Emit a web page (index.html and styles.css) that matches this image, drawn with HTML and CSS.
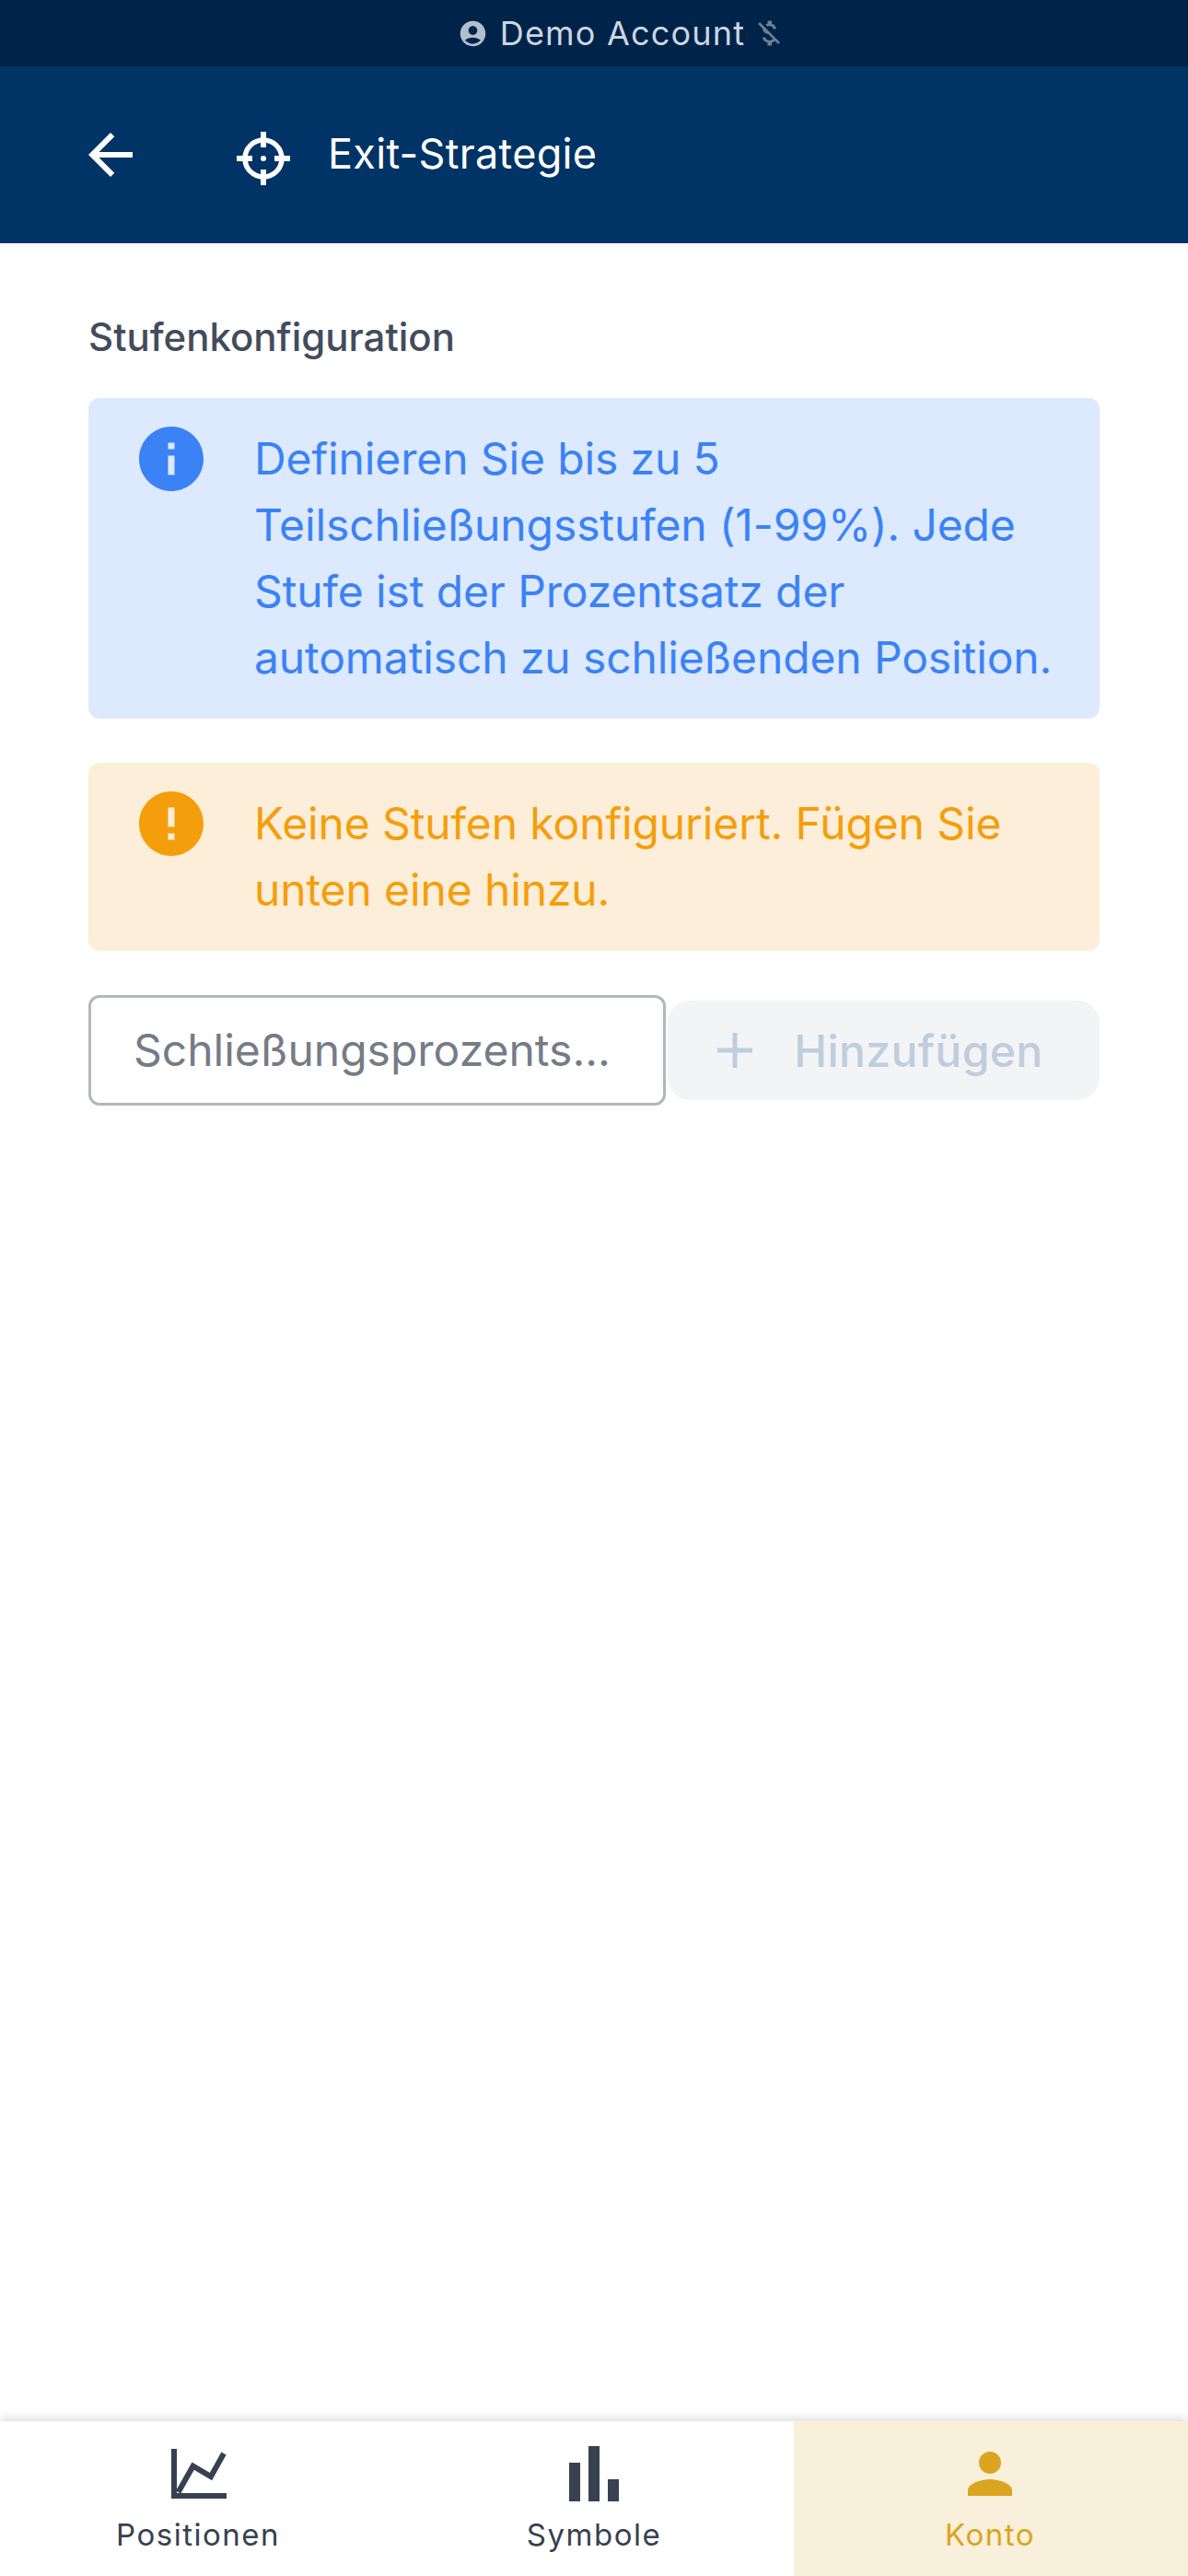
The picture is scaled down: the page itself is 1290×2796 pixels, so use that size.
FILE: index.html
```html
<!DOCTYPE html>
<html lang="de">
<head>
<meta charset="utf-8">
<title>Exit-Strategie</title>
<link rel="stylesheet" href="styles.css">
</head>
<body>
<div class="app">
  <div class="status">
    <svg class="status-user" viewBox="0 0 24 24"><path d="M12 2C6.48 2 2 6.48 2 12s4.48 10 10 10 10-4.48 10-10S17.52 2 12 2zm0 4c1.93 0 3.5 1.57 3.5 3.5S13.93 13 12 13s-3.5-1.57-3.5-3.5S10.07 6 12 6zm0 14c-2.03 0-4.43-.82-6.14-2.88C7.55 15.8 9.68 15 12 15s4.45.8 6.14 2.12C16.43 19.18 14.03 20 12 20z"/></svg>
    <span class="status-text">Demo Account</span>
    <svg class="status-money" viewBox="0 0 24 24"><path d="M12.5 6.9c1.78 0 2.44.85 2.5 2.1h2.21c-.07-1.72-1.12-3.3-3.21-3.81V3h-3v2.16c-.53.12-1.03.3-1.48.54l1.47 1.47c.41-.17.91-.27 1.51-.27zM5.33 4.06L4.06 5.33 7.5 8.77c0 2.08 1.56 3.22 3.91 3.91l3.51 3.51c-.34.48-1.05.91-2.42.91-2.06 0-2.87-.92-2.98-2.1h-2.2c.12 2.19 1.76 3.42 3.68 3.83V21h3v-2.15c.96-.18 1.82-.55 2.45-1.12l2.22 2.22 1.27-1.27L5.33 4.06z"/></svg>
  </div>
  <header class="appbar">
    <svg class="back" viewBox="0 0 24 24"><path d="M20 11H7.83l5.59-5.59L12 4l-8 8 8 8 1.41-1.41L7.83 13H20v-2z"/></svg>
    <svg class="target" viewBox="0 0 60 60"><circle cx="30" cy="30" r="20" fill="none" stroke="#fff" stroke-width="5.5"/><path d="M27 1h6v17h-6zM27 42h6v17h-6zM1 27h17v6H1zM42 27h17v6H42z" fill="#fff"/><circle cx="30" cy="30" r="3" fill="#fff"/></svg>
    <h1 class="title">Exit-Strategie</h1>
  </header>
  <main class="main">
    <h2 class="section">Stufenkonfiguration</h2>
    <div class="notice notice-info">
      <svg class="notice-icon" viewBox="0 0 24 24"><path d="M12 2C6.48 2 2 6.48 2 12s4.48 10 10 10 10-4.48 10-10S17.52 2 12 2zm1 15h-2v-6h2v6zm0-8h-2V7h2v2z"/></svg>
      <p class="notice-text">Definieren Sie bis zu 5 Teilschließungsstufen (1-99%). Jede Stufe ist der Prozentsatz der automatisch zu schließenden Position.</p>
    </div>
    <div class="notice notice-warn">
      <svg class="notice-icon" viewBox="0 0 24 24"><path d="M12 2C6.47 2 2 6.47 2 12s4.47 10 10 10 10-4.47 10-10S17.53 2 12 2zm1 15h-2v-2h2v2zm0-4h-2V7h2v6z"/></svg>
      <p class="notice-text">Keine Stufen konfiguriert. Fügen Sie unten eine hinzu.</p>
    </div>
    <div class="add-row">
      <div class="field">Schließungsprozents...</div>
      <div class="add-btn">
        <svg class="add-icon" viewBox="0 0 38 38"><path d="M16.5 0h5v16.500H38v5H21.500V38h-5V21.500H0v-5h16.500z"/></svg>
        <span>Hinzufügen</span>
      </div>
    </div>
  </main>
  <nav class="nav">
    <div class="tab">
      <svg class="tab-icon" viewBox="0 0 72 72"><path d="M7 9h6v48h54v6H7z"/><path d="M14.600 56 L30.600 27.700 L50 39 L64 14" fill="none" stroke="currentColor" stroke-width="6"/></svg>
      <span class="tab-label">Positionen</span>
    </div>
    <div class="tab">
      <svg class="tab-icon" viewBox="0 0 72 72"><path d="M9 24h12v42H9zM30 6h12v60H30zM51 42h12v24H51z"/></svg>
      <span class="tab-label">Symbole</span>
    </div>
    <div class="tab tab-active">
      <svg class="tab-icon" viewBox="0 0 24 24"><path d="M12 12c2.210 0 4-1.790 4-4s-1.790-4-4-4-4 1.790-4 4 1.790 4 4 4zm0 2c-2.670 0-8 1.340-8 4v2h16v-2c0-2.660-5.330-4-8-4z"/></svg>
      <span class="tab-label">Konto</span>
    </div>
  </nav>
</div>
</body>
</html>
```
FILE: styles.css
```css
* { box-sizing: border-box; }
html, body { margin: 0; padding: 0; }
body { font-family: "Inter", "Liberation Sans", sans-serif; background: #fff; }
.app { width: 1290px; height: 2796px; display: flex; flex-direction: column; overflow: hidden; }

.status { height: 72px; background: #00234a; display: flex; align-items: center; justify-content: center; padding-left: 60px; color: #ccd6e0; }
.status-user { width: 33px; height: 33px; fill: #b3bfcc; margin-right: 13px; }
.status-text { font-size: 36px; letter-spacing: 1.2px; line-height: 72px; }
.status-money { width: 36px; height: 36px; fill: #6f7f91; margin-left: 8px; }

.appbar { height: 192px; background: #003366; display: flex; align-items: center; padding-left: 84px; color: #fff; }
.back { width: 72px; height: 72px; fill: #fff; }
.target { width: 60px; height: 60px; margin-left: 100px; margin-top: 7px; }
.title { margin: -3px 0 0 40px; font-size: 45px; font-weight: 400; letter-spacing: 0.3px; line-height: 60px; }

.main { flex: 1; padding: 0 96px; display: flex; flex-direction: column; }
.section { margin: 0; padding-top: 75px; height: 168px; font-size: 42px; line-height: 54px; font-weight: 500; color: #434c5c; }
.notice { display: flex; gap: 48px; padding: 24px 48px 30px; border-radius: 12px; margin-bottom: 48px; }
.notice-icon { width: 84px; height: 84px; flex: none; }
.notice-text { margin: 6px 0 0; font-size: 48px; line-height: 72px; letter-spacing: -0.12px; }
.notice-info { background: #dce9fe; color: #3b82f6; }
.notice-info .notice-icon { fill: #3b82f6; }
.notice-warn { background: #fdeed9; color: #f59e0b; }
.notice-warn .notice-icon { fill: #f59e0b; }

.add-row { display: flex; align-items: center; gap: 2px; }
.field { width: 627px; height: 120px; border: 3px solid #b3b7bf; border-radius: 12px; padding-left: 46px; font-size: 48px; line-height: 114px; color: #767b86; white-space: nowrap; }
.add-btn { flex: 1; height: 108px; background: #f3f4f6; border-radius: 24px; padding-right: 7px; display: flex; align-items: center; justify-content: center; gap: 45px; font-size: 48px; font-weight: 500; letter-spacing: 0.4px; color: #bfcddd; }
.add-icon { width: 38px; height: 38px; fill: #bfcddd; }

.nav { height: 168px; display: flex; background: #fff; box-shadow: 0 -3px 10px rgba(0,0,0,.14); position: relative; }
.tab { flex: 0 0 430px; display: flex; flex-direction: column; align-items: center; padding-top: 21px; color: #374151; }
.tab-icon { width: 72px; height: 72px; fill: currentColor; }
.tab-label { font-size: 33px; line-height: 48px; letter-spacing: 1.5px; margin-top: 6px; }
.tab-active { background: #f9f0dc; background-clip: padding-box; border-left: 2px solid transparent; padding-right: 2px; color: #daa520; }
```
